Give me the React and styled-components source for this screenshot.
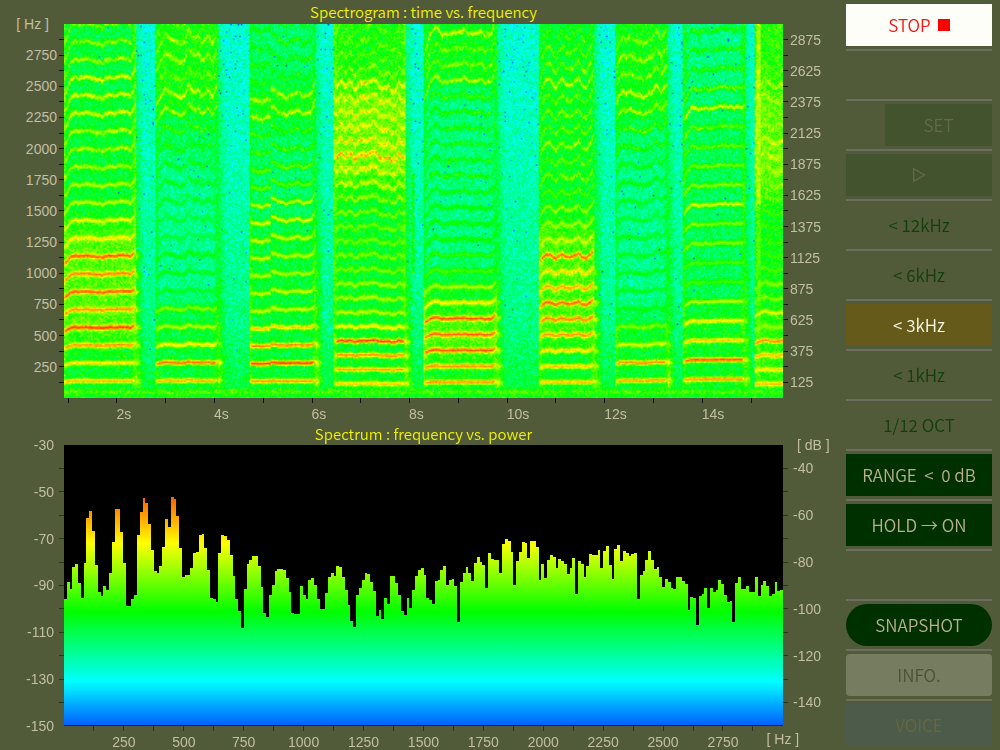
import React, { useLayoutEffect, useRef } from "react";
import styled, { createGlobalStyle, css } from "styled-components";

const GlobalStyle = createGlobalStyle`
  *, *::before, *::after { box-sizing: border-box; }
  body { margin: 0; background: #515a39; }
`;

const uiFont = `"Noto Sans CJK KR", "Noto Sans", sans-serif`;
const axisFont = `"Liberation Sans", Arial, sans-serif`;

const Page = styled.div`
  display: grid;
  grid-template-columns: minmax(0, 1fr) 154px;
  min-height: 100vh;
  background: #515a39;
`;

const Charts = styled.main`
  display: grid;
  grid-template-columns: 64px minmax(0, 1fr) 63px;
  grid-template-rows: 24px minmax(374px, 374fr) 24px 23px minmax(281px, 281fr) 24px;
`;

const Title = styled.h2`
  grid-column: 2;
  margin: 0;
  font: 350 15px/24px ${uiFont};
  text-align: center;
  color: #f2f200;
  white-space: pre;
`;

const VAxis = styled.div`
  display: flex;
  flex-direction: column;
  justify-content: space-between;
  min-height: 0;
`;

const VMark = styled.div`
  display: flex;
  align-items: center;
  justify-content: flex-end;
  flex-direction: ${(p) => (p.$side === "right" ? "row-reverse" : "row")};
  gap: ${(p) => (p.$wide ? 5 : 2)}px;
  height: 0;
`;

const VTick = styled.i`
  width: 5px;
  height: 1px;
  background: ${(p) => (p.$hidden ? "transparent" : p.$color)};
`;

const AxisText = styled.span`
  font: 14px/16px ${axisFont};
  color: #c3bfa2;
  white-space: nowrap;
  ${(p) => p.$unit && css`padding: 0 8px 0 4px;`}
`;

const HAxis = styled.div`
  grid-column: 2;
  display: flex;
  justify-content: space-between;
  min-width: 0;
  padding: ${(p) => (p.$time ? "0 4.5% 0 0.5%" : "0")};
`;

const HMark = styled.div`
  display: flex;
  flex-direction: column;
  align-items: ${(p) => (p.$start ? "flex-start" : "center")};
  gap: ${(p) => (p.$unit ? 0 : 3)}px;
  width: 0;
`;

const HTick = styled.i`
  flex: none;
  width: 1px;
  height: 5px;
  background: ${(p) => (p.$hidden ? "transparent" : p.$color)};
`;

const Plot = styled.div`
  contain: size;
  min-width: 0;
  min-height: 0;
  background: #000;
`;

const Spectrogram = styled.canvas`
  display: block;
  width: 100%;
  height: 100%;
`;

const Spectrum = styled.svg`
  display: block;
  width: 100%;
  height: 100%;
  border-bottom: 1px solid #12202c;
`;

const Sidebar = styled.aside`
  display: flex;
  flex-direction: column;
  padding: 1px 8px 0 0;
`;

const Cell = styled.div`
  display: flex;
  justify-content: flex-end;
  height: 50px;
  padding: 3px 0;
  border-bottom: 2px solid #6c6e60;
  &:last-child { height: 48px; border-bottom: 0; }
`;

const tones = {
  stop: ["#fdfef8", "#fa1414"],
  dim: ["#42532d", "#646a47"],
  plain: ["transparent", "#123f0c"],
  active: ["#665a1b", "#fbfae6"],
  solid: ["#003000", "#b9b088"],
  info: ["#757c60", "#4b5236"],
  voice: ["#4d5c4a", "#65673f"],
};

const Button = styled.button`
  display: flex;
  align-items: center;
  justify-content: center;
  gap: 7px;
  width: ${(p) => (p.$narrow ? "107px" : "100%")};
  height: 42px;
  padding: 0;
  border: 0;
  border-radius: ${(p) => p.$radius || 0}px;
  background: ${(p) => tones[p.$tone][0]};
  color: ${(p) => tones[p.$tone][1]};
  font: 350 17px/24px ${uiFont};
  white-space: pre;
  cursor: pointer;
  &:disabled { cursor: default; }
`;

const StopSquare = styled.i`
  width: 12px;
  height: 12px;
  background: #ff0000;
`;

/* Peak-hold trace: 256 bins, 45 = -30 dB, 888 = -150 dB. */
const TRACE_TOP = 45;
const TRACE_FLOOR = 888;
const TRACE = [
  508, 458, 478, 412, 404, 461, 505, 401, 265, 244, 303, 406, 487, 500, 469, 483,
  430, 337, 238, 238, 307, 399, 530, 530, 508, 496, 316, 247, 205, 221, 284, 360,
  424, 429, 410, 352, 268, 291, 202, 209, 259, 356, 443, 437, 437, 415, 370, 367,
  315, 314, 356, 422, 505, 510, 517, 370, 317, 319, 332, 377, 438, 510, 546, 596,
  478, 404, 392, 378, 378, 410, 472, 550, 563, 498, 465, 423, 419, 419, 422, 445,
  487, 550, 555, 553, 469, 498, 509, 450, 445, 465, 510, 539, 539, 491, 443, 431,
  439, 408, 413, 443, 482, 527, 575, 592, 498, 475, 450, 429, 433, 458, 486, 559,
  542, 568, 506, 525, 440, 438, 459, 498, 546, 556, 507, 536, 482, 438, 422, 416,
  436, 506, 512, 524, 454, 450, 422, 410, 466, 450, 447, 469, 578, 457, 429, 413,
  431, 455, 401, 383, 398, 405, 477, 371, 387, 390, 391, 430, 344, 328, 335, 367,
  468, 394, 368, 337, 341, 385, 335, 334, 351, 452, 404, 446, 392, 375, 383, 415,
  389, 394, 402, 432, 414, 385, 495, 395, 403, 442, 408, 373, 376, 375, 362, 416,
  364, 349, 407, 447, 357, 346, 393, 364, 371, 380, 373, 370, 508, 437, 423, 392,
  365, 391, 419, 412, 442, 472, 449, 458, 476, 480, 443, 441, 453, 462, 543, 504,
  507, 588, 499, 495, 475, 536, 475, 489, 482, 451, 463, 497, 519, 516, 579, 461,
  442, 478, 478, 469, 489, 487, 442, 501, 466, 454, 470, 501, 493, 457, 486, 483,
];

const tracePath =
  `M0 ${TRACE_FLOOR}` + TRACE.map((y, i) => `V${y}H${i + 1}`).join("") + `V${TRACE_FLOOR}Z`;

/*
 * Sung notes. x0/x1 bound a note on a 719 x 375 field, pitch is the spacing of its
 * harmonics, base the line they start from, amps the strength of each harmonic
 * (0 cyan, 1 green, 2 yellow, 3 red), bend the pitch contour, bands the
 * strength between harmonics as [top, bottom, level].
 */
const NOTES = [
  { x0: 0, x1: 71, pitch: 17.8, base: 375.7, edge: 1.6,
    amps: [2.35, 2.2, 2.5, 2.9, 2.5, 2.8, 2.6, 2.8, 2.1, 1.95, 1.8, 1.75, 1.65, 1.65, 1.7, 1.95, 1.85, 1.95, 1.65, 1.55, 1.5],
    bend: [[0, -1], [0.1, 0], [0.15, 0.2], [0.22, 0], [0.3, 0.12], [0.4, 0], [0.55, 0], [0.65, 0.16], [0.72, 0.1], [0.8, 0.25], [0.94, 0], [1, 0.7]],
    bands: [[0, 70, 0.75], [70, 200, 0.8], [200, 320, 1.3], [320, 375, 0.85]] },
  { x0: 92, x1: 153, pitch: 18, base: 375.6, edge: 1.3, limit: 285,
    amps: [2.4, 2.7, 2.1, 1.75, 1.55, 0.9, 0.95, 1, 0.8, 0.8, 0.9, 0.95, 0.95, 1, 1.2, 1.65, 1.85, 1.35, 1.6, 1.65, 1.3],
    bend: [[0, -0.7], [0.15, 0.3], [0.3, -0.1], [0.4, -0.3], [0.48, -0.1], [0.53, 0.6], [0.6, 0.05], [0.68, 0.25], [0.75, -0.1], [0.85, 0.15], [0.92, -0.25], [1, 0.5]],
    bands: [[0, 90, 1], [90, 140, 0.65], [140, 280, 0.45], [280, 375, 0.8]] },
  { x0: 186, x1: 251, pitch: 17.9, base: 375.8, edge: 1.45, limit: 190,
    amps: [2.5, 2.9, 2.6, 2.25, 1.8, 1.8, 1.7, 1.75, 1.8, 1.9, 1.8, 1.4, 1.4, 1.2, 1.2, 1.75, 1.65, 1, 1.05, 1.05, 1],
    bend: [[0, -0.15], [0.1, -0.3], [0.2, -0.4], [0.31, -0.15], [0.33, 0.5], [0.42, 0.08], [0.5, -0.02], [0.6, -0.05], [0.7, 0.15], [0.82, 0], [0.94, 0], [1, 0.8]],
    bands: [[0, 60, 0.6], [60, 100, 0.95], [100, 200, 0.6], [200, 375, 0.8]] },
  { x0: 271, x1: 341, pitch: 14.2, base: 374.9, edge: 1.5, rough: 1.5,
    amps: [2.25, 2.4, 2.55, 2.9, 2.1, 1.75, 1.7, 1.65, 1.5, 1.5, 1.45, 1.45, 1.5, 1.6, 1.8, 1.95, 2.4, 2.1, 1.95, 1.95, 2, 2.1, 1.5, 1.35, 1.35, 1.3],
    bend: [[0, 0], [0.06, 0.2], [0.13, 0], [0.2, 0.2], [0.27, -0.1], [0.35, 0.15], [0.45, 0.1], [0.58, 0.2], [0.66, -0.12], [0.78, -0.05], [0.86, -0.15], [0.91, 0.25], [1, -0.1]],
    bands: [[0, 62, 1], [62, 160, 1.4], [160, 230, 0.85], [230, 375, 0.85]] },
  { x0: 360, x1: 432, pitch: 15.9, base: 374.9, edge: 1.6, limit: 265,
    amps: [2.5, 2.5, 2.8, 2.7, 2.8, 2.1, 1.7, 1.3, 1.2, 1.1, 1.05, 1, 1, 1, 1, 1, 1, 1.05, 1.15, 1.75, 1.45, 1.4, 1.8],
    bend: [[0, -0.9], [0.1, 0.1], [0.2, 0.25], [0.24, -0.1], [0.35, 0.05], [0.45, -0.05], [0.55, 0.12], [0.68, -0.02], [0.82, 0], [0.93, -0.15], [1, 0.7]],
    bands: [[0, 65, 0.9], [65, 250, 0.5], [250, 290, 0.9], [290, 335, 1.3], [335, 375, 0.9]] },
  { x0: 476, x1: 530, pitch: 15.75, base: 374.8, edge: 1.6, limit: 210, rough: 1.4,
    amps: [2.3, 2.25, 2.15, 2.5, 2.6, 2.75, 2.45, 2.2, 2.75, 1.85, 1.65, 1.6, 1.3, 1.5, 1.35, 1.6, 1.4, 1.5, 1.4, 1.75, 1.5, 1.4, 1.2],
    bend: [[0, -0.6], [0.12, 0.25], [0.2, 0.15], [0.3, -0.1], [0.38, 0.12], [0.5, -0.1], [0.62, 0.1], [0.72, 0.25], [0.86, -0.25], [1, 0.7]],
    bands: [[0, 200, 0.85], [200, 320, 1.25], [320, 375, 0.85]] },
  { x0: 552, x1: 603, pitch: 18, base: 375.5, edge: 1.4, limit: 303,
    amps: [2.45, 2.55, 1.85, 1.5, 0.95, 0.95, 0.95, 0.9, 0.9, 0.85, 0.9, 1, 1, 1.1, 1.3, 1.65, 1.85, 1.5, 1.65, 1.5, 1.1],
    bend: [[0, -0.5], [0.1, 0.05], [0.3, 0.05], [0.4, -0.1], [0.55, -0.2], [0.68, 0], [0.8, 0.55], [0.88, 0.1], [1, 0.6]],
    bands: [[0, 95, 0.95], [95, 140, 0.6], [140, 290, 0.45], [290, 375, 0.85]] },
  { x0: 620, x1: 680, pitch: 19.4, base: 375.5, edge: 1.35,
    amps: [2.5, 2.8, 2.25, 2.15, 1.75, 1.25, 1.3, 1.55, 1.55, 1.85, 1.6, 1.45, 1.35, 1.35, 1.9, 1.4, 1.1, 1.1, 1.05],
    bend: [[0, -0.9], [0.12, 0.05], [0.22, -0.1], [0.35, 0.02], [0.5, 0], [0.75, 0.12], [1, 0.1]],
    bands: [[0, 75, 0.5], [75, 280, 0.65], [280, 375, 0.9]] },
  { x0: 692, x1: 719, pitch: 14.3, base: 375, edge: 1.6,
    amps: [2.3, 2.15, 2.3, 2.55, 1.6, 1.9, 1.5, 1.55, 1.3, 1.2, 1.2, 1.2, 1.2, 1.45, 1.5, 1.6, 1.8, 1.8, 1.6, 1.5, 1.6, 1.6, 1.3, 1.2, 1.2, 1.2],
    bend: [[0, -0.6], [0.3, 0.3], [0.5, 0], [0.7, -0.1], [1, -0.05]],
    bands: [[0, 60, 1.1], [60, 175, 1.35], [175, 290, 0.95], [290, 375, 1.1]] },
];

const STOPS = [
  [-1, 0, 60, 255],
  [0, 0, 255, 255],
  [1, 0, 255, 0],
  [2, 255, 255, 0],
  [3, 255, 40, 0],
];

function colour(v) {
  const c = Math.max(-1, Math.min(2.98, v));
  const k = Math.floor(c) + 1;
  const f = c - Math.floor(c);
  return [1, 2, 3].map((j) => STOPS[k][j] + (STOPS[k + 1][j] - STOPS[k][j]) * f);
}

function bendAt(points, t) {
  for (let i = 1; i < points.length; i++) {
    if (t <= points[i][0]) {
      const [t0, a] = points[i - 1];
      const [t1, b] = points[i];
      return a + ((b - a) * (t - t0)) / (t1 - t0);
    }
  }
  return points[points.length - 1][1];
}

/* Band levels blend into each other over a few rows. */
function levelAt(bands, y) {
  let sum = 0;
  for (let k = -2; k <= 2; k++) {
    const at = Math.max(0, Math.min(374, y + k * 7));
    sum += bands.find((b) => at >= b[0] && at < b[1])[2];
  }
  return sum / 5;
}

function randomSource(seed) {
  let s = seed;
  return () => {
    s = (s + 0x6d2b79f5) | 0;
    let t = Math.imul(s ^ (s >>> 15), 1 | s);
    t = (t + Math.imul(t ^ (t >>> 7), 61 | t)) ^ t;
    return ((t ^ (t >>> 14)) >>> 0) / 4294967296;
  };
}

function paintSpectrogram(canvas) {
  const W = canvas.width;
  const H = canvas.height;
  const rand = randomSource(71);
  const ctx = canvas.getContext("2d");
  const image = ctx.createImageData(W, H);
  const jitter = Array.from({ length: W }, () => rand() - 0.5);
  for (let i = 0; i < W; i++) {
    const x = ((i + 0.5) * 719) / W;
    const note = NOTES.find((n) => x >= n.x0 - 1 && x <= n.x1 + 1);
    const tail = NOTES.find((n) => x > n.x1 + 1 && x < n.x1 + 9);
    const t = note ? (x - note.x0) / (note.x1 - note.x0) : 0;
    const sway = note ? (jitter[i] + jitter[Math.max(0, i - 1)]) * 0.12 * (note.rough || 1) : 0;
    const bend = note ? bendAt(note.bend, t) + sway : 0;
    const side = note ? Math.min(x - note.x0, note.x1 - x) : 0;
    const edge = note && note.x1 < 719 ? Math.exp((-side * side) / 5) : 0;
    const reach = note && note.x1 === 719 ? 1 : Math.min(1, (side + 3) / 5);
    for (let j = 0; j < H; j++) {
      const y = ((j + 0.5) * 375) / H;
      const depth = y / 375;
      const rest = 0.15 + 0.45 * Math.pow(depth, 1.2) + (y > 300 ? (y - 300) / 330 : 0);
      const noise = rand() + rand() + rand() - 1.5;
      let v = rest;
      let grain = 0.38;
      if (note) {
        const level = levelAt(note.bands, y);
        v = level;
        const n = Math.round((note.base - y) / (note.pitch + bend));
        for (let h = Math.max(1, n - 1); h <= Math.min(note.amps.length, n + 1); h++) {
          const centre = note.base - h * (note.pitch + bend);
          const off = y - centre;
          const amp = note.amps[h - 1] + (h > 13 ? (jitter[(i + h * 37) % W] || 0) * 0.4 : 0);
          const line = level + (amp - level) * reach * Math.exp((-off * off) / 6);
          if (Math.abs(off) < 6) v = Math.max(v, line);
          grain = Math.min(grain, 0.38 - 0.26 * Math.exp((-off * off) / 5) * (h < 13 ? 1 : 0.4));
        }
        const top = note.limit || 0;
        if (y > top && y < 366) v = Math.max(v, v + (note.edge - v) * edge * 0.6);
        else if (y <= top) v = Math.max(v, v + (1 - v) * edge * 0.6);
      } else if (tail) {
        const fade = 1 - (x - tail.x1) / 9;
        v = rest + (0.35 + 0.35 * depth) * fade;
        const h = Math.round((tail.base - y) / tail.pitch);
        if (h > 0 && h < 9) {
          const centre = tail.base - h * tail.pitch;
          v += (tail.amps[h - 1] - 1) * 0.6 * fade * Math.exp(-Math.pow(y - centre, 2) / 8);
        }
      }
      if (x > 692 && x < 696) v = Math.max(v, y < 180 ? 1.7 : 1.3);
      if (x > 348 && x < 350 && y > 150 && y < 250) v = 0.95;
      if (y > 365) v = 0.95 + 0.3 * Math.exp(-Math.pow(y - 369, 2) / 6);
      v += noise * grain;
      if (v < 0.55 && rand() < 0.013 * (1.15 - depth)) v = -0.45 - rand() * 0.5;
      const [r, g, b] = colour(v);
      const o = (j * W + i) * 4;
      image.data[o] = r;
      image.data[o + 1] = g;
      image.data[o + 2] = b;
      image.data[o + 3] = 255;
    }
  }
  ctx.putImageData(image, 0, 0);
}

function SpectrogramPlot() {
  const ref = useRef(null);
  useLayoutEffect(() => paintSpectrogram(ref.current), []);
  return (
    <Plot>
      <Spectrogram ref={ref} width={480} height={256} role="img" aria-label="Spectrogram" />
    </Plot>
  );
}

function SpectrumPlot() {
  return (
    <Plot>
      <Spectrum
        viewBox={`0 ${TRACE_TOP} 256 ${TRACE_FLOOR - TRACE_TOP}`}
        preserveAspectRatio="none"
        role="img"
        aria-label="Spectrum"
      >
        <defs>
          <linearGradient id="power" gradientUnits="userSpaceOnUse" x1="0" x2="0" y1={TRACE_TOP} y2={TRACE_FLOOR}>
            <stop offset="0.14" stopColor="#ff3000" />
            <stop offset="0.35" stopColor="#ffff00" />
            <stop offset="0.595" stopColor="#00ff00" />
            <stop offset="0.845" stopColor="#00ffff" />
            <stop offset="1" stopColor="#0060ff" />
          </linearGradient>
        </defs>
        <path d={tracePath} fill="url(#power)" shapeRendering="crispEdges" />
      </Spectrum>
    </Plot>
  );
}

function VerticalAxis({ side, marks, color, wide }) {
  return (
    <VAxis>
      {marks.map((label, i) => {
        const end = i === 0 || i === marks.length - 1;
        const unit = label.startsWith("[");
        return (
          <VMark key={i} $side={side} $wide={wide}>
            {label && <AxisText $unit={unit}>{label}</AxisText>}
            <VTick $hidden={end} $color={color} />
          </VMark>
        );
      })}
    </VAxis>
  );
}

function HorizontalAxis({ marks, color, time }) {
  return (
    <HAxis $time={time}>
      {marks.map((label, i) => (
        <HMark key={i} $start={time} $unit={label.startsWith("[")}>
          <HTick $hidden={!time && (i === 0 || i === marks.length - 1)} $color={color} />
          {label && <AxisText>{label}</AxisText>}
        </HMark>
      ))}
    </HAxis>
  );
}

const steps = (count, label) => Array.from({ length: count }, (_, i) => label(i));
const hzLeft = steps(25, (i) => (i === 0 ? "[ Hz ]" : i % 2 || i === 24 ? "" : String(3000 - i * 125)));
const hzRight = steps(25, (i) => (i % 2 && i < 24 ? String(3000 - i * 125) : ""));
const dbLeft = steps(13, (i) => (i % 2 ? "" : String(-30 - i * 10)));
const dbRight = steps(13, (i) => (i === 0 ? "[ dB ]" : i % 2 ? String(-30 - i * 10) : ""));
const seconds = steps(15, (i) => (i % 2 ? `${i + 1}s` : ""));
const hzBottom = steps(25, (i) => (i === 24 ? "[ Hz ]" : i === 0 || i % 2 ? "" : String(i * 125)));

function PlayIcon() {
  return (
    <svg width="14" height="16" viewBox="0 0 14 16" fill="none" stroke="currentColor" strokeWidth="1.4" aria-hidden="true">
      <path d="M1.7 1.6V14.4L12.6 8Z" />
    </svg>
  );
}

const controls = [
  { id: "stop", tone: "stop", text: "STOP", icon: <StopSquare /> },
  { id: "gap-1" },
  { id: "set", tone: "dim", text: "SET", narrow: true, disabled: true },
  { id: "play", tone: "dim", icon: <PlayIcon />, label: "Play", disabled: true },
  { id: "12k", tone: "plain", text: "< 12kHz" },
  { id: "6k", tone: "plain", text: "< 6kHz" },
  { id: "3k", tone: "active", text: "< 3kHz", pressed: true },
  { id: "1k", tone: "plain", text: "< 1kHz" },
  { id: "oct", tone: "plain", text: "1/12 OCT" },
  { id: "range", tone: "solid", text: "RANGE  <  0 dB" },
  { id: "hold", tone: "solid", text: "HOLD → ON" },
  { id: "gap-2" },
  { id: "snapshot", tone: "solid", text: "SNAPSHOT", radius: 21 },
  { id: "info", tone: "info", text: "INFO.", radius: 4 },
  { id: "voice", tone: "voice", text: "VOICE", disabled: true },
];

export default function App() {
  return (
    <>
      <GlobalStyle />
      <Page>
        <Charts>
          <Title>Spectrogram : time vs. frequency</Title>
          <span />
          <VerticalAxis side="left" marks={hzLeft} color="#111" />
          <SpectrogramPlot />
          <VerticalAxis side="right" marks={hzRight} color="#111" />
          <HorizontalAxis marks={seconds} color="#111" time />
          <Title>Spectrum : frequency vs. power</Title>
          <span />
          <VerticalAxis side="left" marks={dbLeft} color="#2c3220" wide />
          <SpectrumPlot />
          <VerticalAxis side="right" marks={dbRight} color="#2c3220" wide />
          <HorizontalAxis marks={hzBottom} color="#2c3220" />
        </Charts>
        <Sidebar>
          {controls.map((c) => (
            <Cell key={c.id}>
              {c.tone && (
                <Button
                  type="button"
                  $tone={c.tone}
                  $narrow={c.narrow}
                  $radius={c.radius}
                  disabled={c.disabled}
                  aria-label={c.label}
                  aria-pressed={c.pressed}
                >
                  {c.text}
                  {c.icon}
                </Button>
              )}
            </Cell>
          ))}
        </Sidebar>
      </Page>
    </>
  );
}
